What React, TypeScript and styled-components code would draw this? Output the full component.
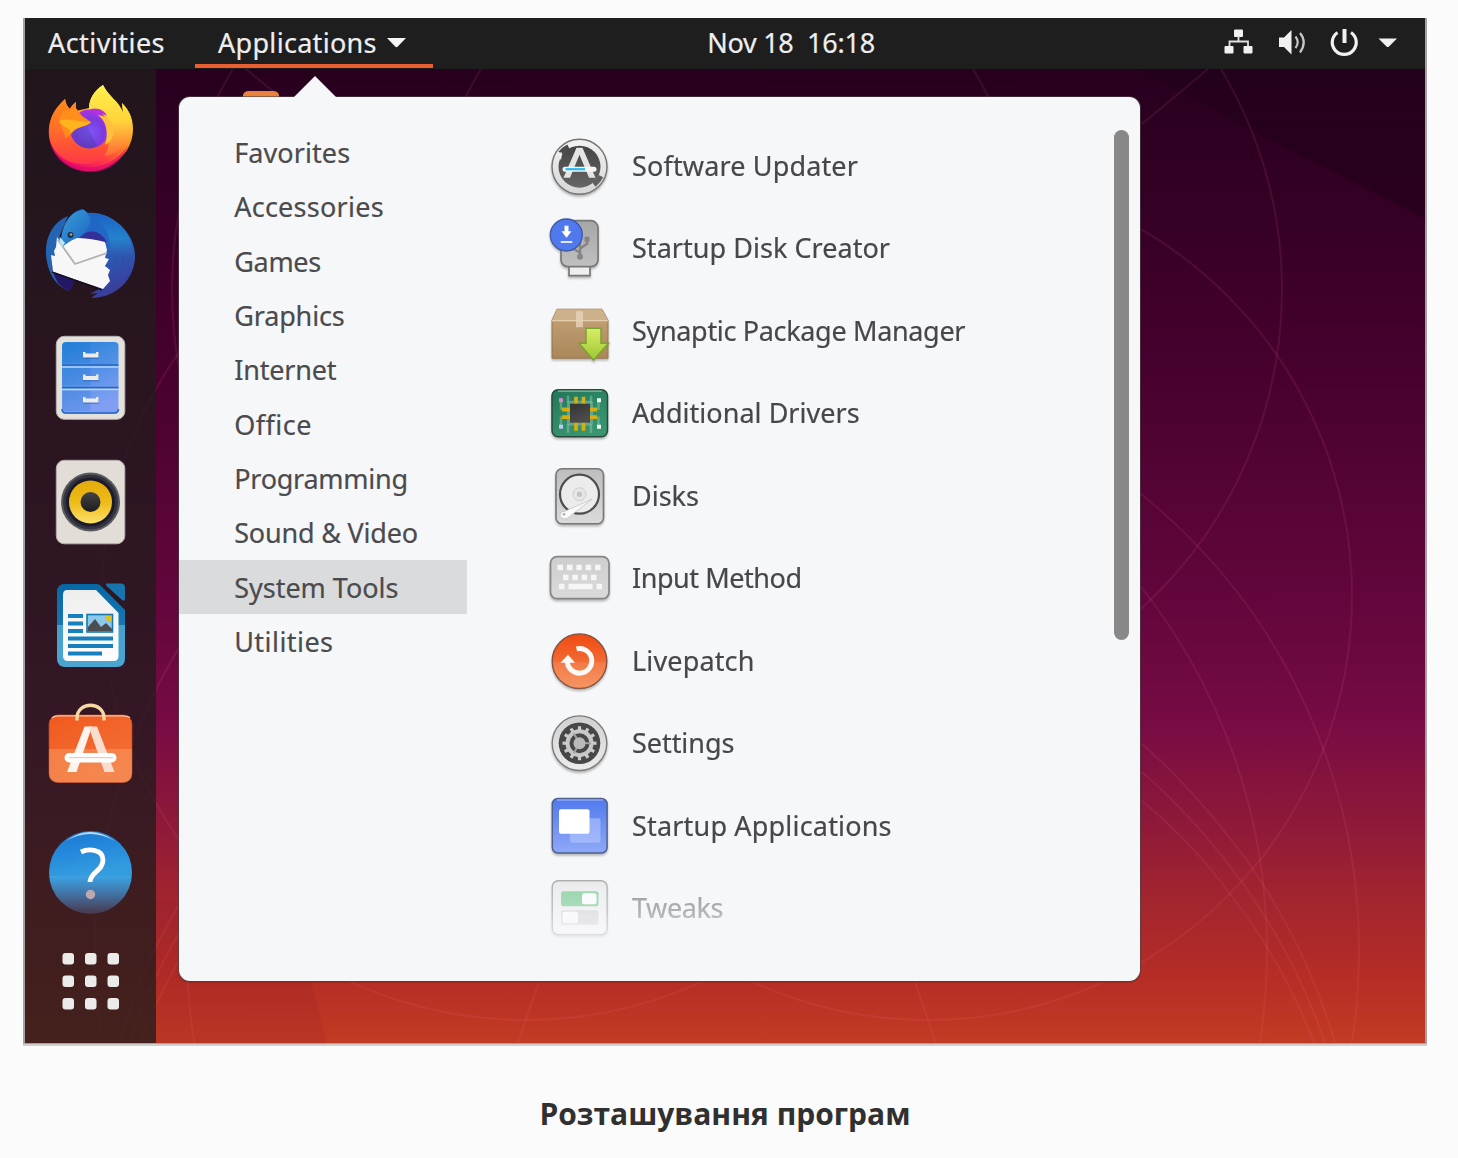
import React from 'react';
import styled, { createGlobalStyle } from 'styled-components';

const GlobalStyle = createGlobalStyle`
  * { box-sizing: border-box; }
  html, body { margin: 0; padding: 0; background: #fbfbfb; }
  svg { display: block; overflow: visible; }
`;

const UI_FONT = `'Noto Sans', 'Open Sans', sans-serif`;

const Page = styled.main`
  width: 1458px;
  height: 1158px;
  padding: 18px 0 0 23px;
  background: #fbfbfb;
  font-family: ${UI_FONT};
  overflow: hidden;
`;

const Figure = styled.figure`
  width: 1404px;
  margin: 0;
  display: flex;
  flex-direction: column;
`;

const Screen = styled.div`
  display: flex;
  flex-direction: column;
  height: 1026px;
  border: 2px solid #a3a1a2;
  border-top: 0;
  border-bottom-width: 1px;
  box-shadow: 0 2px 0 #d0d0d0;
`;

const Caption = styled.figcaption`
  padding-top: 48px;
  text-align: center;
  font: 700 30px/44px 'Open Sans', 'Noto Sans', sans-serif;
  color: #303030;
`;

const TopBar = styled.header`
  display: grid;
  grid-template-columns: 1fr auto 1fr;
  height: 51px;
  flex: none;
  background: #1e1e1e;
  color: #eeeeee;
`;

const BarGroup = styled.div<{ $end?: boolean }>`
  display: flex;
  align-items: flex-start;
  justify-content: ${p => (p.$end ? 'flex-end' : 'flex-start')};
`;

const Label = styled.span<{ $track: number }>`
  font-size: 27px;
  letter-spacing: ${p => p.$track}px;
  white-space: pre;
  -webkit-text-stroke: 0.2px currentColor;
`;

const BarButton = styled.div<{ $active?: boolean }>`
  display: flex;
  align-items: center;
  gap: 10px;
  width: ${p => (p.$active ? '238px' : 'auto')};
  height: 50px;
  line-height: 46px;
  padding: ${p => (p.$active ? '4px 0 0 23px' : '4px 0 0 23px')};
  border-bottom: 4px solid ${p => (p.$active ? '#e95f32' : 'transparent')};
`;

const Activities = styled.div`
  width: 170px;
`;

const Clock = styled.div`
  height: 50px;
  line-height: 49px;
  transform: translateX(66px);
`;

const Tray = styled.div`
  width: 204px;
  height: 51px;
`;

const Desktop = styled.section`
  position: relative;
  display: flex;
  flex: 1;
  min-height: 0;
  overflow: hidden;
`;

const Wallpaper = styled.svg`
  position: absolute;
  inset: 0;
  width: 100%;
  height: 100%;
`;

const Dock = styled.nav`
  position: relative;
  display: flex;
  flex-direction: column;
  width: 131px;
  align-items: center;
  background: rgba(32, 27, 28, 0.76);
`;

const DockItem = styled.div`
  width: 124px;
  height: 124px;
  flex: none;
`;

const Menu = styled.div`
  position: absolute;
  left: 154px;
  top: 28px;
  width: 961px;
  height: 884px;
  display: flex;
  border-radius: 11px;
  background: #f6f7f9;
  box-shadow: 0 0 0 1px rgba(80, 72, 72, 0.6), 0 1px 2px rgba(0, 0, 0, 0.4);
`;

const MenuArrow = styled.svg`
  position: absolute;
  left: 113px;
  top: -21px;
  width: 46px;
  height: 22px;
`;

const Categories = styled.ul`
  width: 288px;
  margin: 0;
  padding: 27.9px 0 0;
  list-style: none;
`;

const Category = styled.li<{ $selected?: boolean }>`
  height: 54.35px;
  line-height: 55.6px;
  padding-left: 55.2px;
  color: #4b4b4d;
  background: ${p => (p.$selected ? '#dadbdc' : 'transparent')};
`;

const Apps = styled.ul`
  flex: 1;
  margin: 0;
  padding: 27.8px 0 0 73px;
  list-style: none;
  mask-image: linear-gradient(#000 758px, rgba(0, 0, 0, 0.55) 784px, rgba(0, 0, 0, 0.42) 811px, rgba(0, 0, 0, 0.2) 838px, transparent 862px);
`;

const AppRow = styled.li`
  display: flex;
  align-items: center;
  gap: 12px;
  height: 82.5px;
  color: #47474a;
`;

const AppName = styled(Label)`
  padding-bottom: 1.4px;
`;

const AppIcon = styled.div`
  width: 80px;
  height: 82.5px;
  filter: drop-shadow(0 2px 1px rgba(0, 0, 0, 0.26));
`;

const ScrollThumb = styled.div`
  width: 15px;
  height: 510px;
  margin: 33px 11px 0 0;
  border-radius: 8px;
  background: #888888;
`;

type IconProps = { children: React.ReactNode; top: number };

const DockGlyph = ({ children, top }: IconProps) => (
  <svg width="124" height="124" viewBox={`29 ${top} 124 124`}>{children}</svg>
);

const AppGlyph = ({ children, top }: IconProps) => (
  <svg width="80" height="82.5" viewBox={`540 ${top} 80 82.5`}>{children}</svg>
);

const Grad = ({ id, from, to, mid, x2 = 0 }: { id: string; from: string; to: string; mid?: string; x2?: number }) => (
  <linearGradient id={id} x1="0" y1="0" x2={x2} y2="1">
    <stop offset="0" stopColor={from} />
    {mid && <stop offset=".5" stopColor={mid} />}
    <stop offset="1" stopColor={to} />
  </linearGradient>
);

const Firefox = () => (
  <>
    <defs>
      <linearGradient id="ffBody" x1=".8" y1="0" x2=".3" y2="1">
        <stop offset="0" stopColor="#fff44f" />
        <stop offset=".3" stopColor="#ffc630" />
        <stop offset=".52" stopColor="#ff8a20" />
        <stop offset=".75" stopColor="#ff3b45" />
        <stop offset="1" stopColor="#e5046f" />
      </linearGradient>
      <linearGradient id="ffHead" x1=".3" y1="0" x2=".3" y2="1">
        <stop offset="0" stopColor="#ff8b16" />
        <stop offset=".5" stopColor="#ff6a2a" />
        <stop offset="1" stopColor="#ff3647" />
      </linearGradient>
      <linearGradient id="ffTail" x1=".4" y1="0" x2=".4" y2="1">
        <stop offset="0" stopColor="#fff14d" />
        <stop offset=".5" stopColor="#ffd43b" />
        <stop offset="1" stopColor="#ff6a35" />
      </linearGradient>
      <radialGradient id="ffGlobe" cx=".5" cy=".6" r=".6">
        <stop offset="0" stopColor="#8058f6" />
        <stop offset=".6" stopColor="#7b3ae0" />
        <stop offset="1" stopColor="#b232dc" />
      </radialGradient>
      <Grad id="ffShade" from="#5b48c8" to="#4838a0" />
    </defs>
    <path d="M65 99C60 104 54 110 51 119C47 130 48 143 56 154C68 171 93 177 111 165C125 157 133 144 133 129C133 118 129 110 122 103L123 112C118 100 110 98 103 85C94 91 89 99 89 108L76 111L76 102C73 104 71 107 70 109Q66 106 65 99Z" fill="url(#ffBody)" />
    <path d="M103 85C94 91 89 99 89 109C104 110 113 121 112 133C111 147 101 154 87 153C108 163 128 149 131 129C133 118 129 110 122 103L123 113C118 101 110 99 103 85Z" fill="url(#ffTail)" />
    <path d="M65 99C60 104 54 110 51 119C47 131 49 145 58 154C68 164 86 168 100 160C106 156 109 148 109 138L90 123L76 112L76 102C73 104 71 107 70 109Q66 106 65 99Z" fill="url(#ffHead)" />
    <circle cx="89.500" cy="129" r="19.500" fill="url(#ffGlobe)" />
    <path d="M71 133Q78 126 87 126L97 146Q89 151 80 146Q72 141 71 133Z" fill="url(#ffShade)" opacity=".5" />
    <path d="M50 142C61 166 82 171 103 165C113 162 121 155 128 146C119 166 105 172 90 172C71 172 54 160 50 142Z" fill="#df0472" opacity=".6" />
    <path d="M97 115C107 116 114 121 114 131C113 138 110 143 105 145C109 133 106 119 97 115Z" fill="#ffc13c" />
    <path d="M90 109C99 107 105 111 107 116C101 113 97 115 97 115Z" fill="#b334dc" />
    <path d="M59 121L62 112L76 108L82 116L91 122C88 127 77 126 72 133L66 138Z" fill="#ff8f1a" />
    <path d="M59 121C69 117 79 123 91 122C88 127 73 126 71 134C70 126 62 128 59 121Z" fill="#ffb31e" />
  </>
);

const Thunderbird = () => (
  <>
    <defs>
      <Grad id="tbBody" from="#1b66c6" mid="#2468c2" to="#38409c" x2={0.3} />
      <Grad id="tbHead" from="#3aa0dc" to="#1b62bc" x2={1} />
      <Grad id="tbWing" from="#1b5fc4" mid="#248bd0" to="#373f9f" />
    </defs>
    <path d="M68 216C50 223 43 243 47 262C50 277 58 287 69 291L61 275L52 267L60 235Z" fill="#2564b3" />
    <path d="M52 267L59 271L85 281L74 281C74 287 69 291 69 291C60 288 54 279 52 267Z" fill="#241765" />
    <path d="M62 235C64 224 70 211 83 209L88 213C110 211 134 231 135 254C136 277 118 298 91 298L98 293L90 294L101 288L108 276L100 240L62 246Z" fill="url(#tbBody)" />
    <path d="M78 240C88 226 102 231 107 243L98 244Z" fill="#34309a" />
    <path d="M57 237L56 247L54 251L55 256L51 255L53 272L103 289L110 281L108 275L110 270L105 266L109 259L105 258L107 250L105 242Q90 238 75 238L63 246Z" fill="#f7f7f8" />
    <path d="M58 240L75 264L107 253" fill="none" stroke="#b0b1b5" strokeWidth="1.800" />
    <path d="M61 240C63 221 72 211 84 210C92 216 92 225 86 231C80 239 70 239 63 246Z" fill="url(#tbHead)" />
    <path d="M91 213C110 213 131 229 133 252L128 264L129 253L122 264L121 253L114 263L115 252L108 257C114 239 105 224 91 213Z" fill="url(#tbWing)" opacity=".75" />
    <path d="M60 237L65 243L62 247Q58 241 60 237Z" fill="#b7e5f0" />
    <circle cx="70.500" cy="235" r="3" fill="#173450" />
    <circle cx="71" cy="234.500" r="1.300" fill="#c0a06a" />
    <path d="M52 272L102 290" stroke="#17101d" strokeWidth="1.500" />
  </>
);

const Files = () => (
  <>
    <defs><Grad id="drawer" from="#2383da" to="#809ff3" x2={0.3} /></defs>
    <rect x="56.300" y="336.300" width="68.500" height="83" rx="8" fill="#e4e1da" stroke="#b8b1b2" strokeWidth="1" />
    <rect x="62" y="342" width="56.500" height="72" rx="4" fill="url(#drawer)" />
    <path d="M90.500 343v20h-28v-17q0-3 4-3zM90.500 368v17h-28v-17zM90.500 391v20h-24q-4 0-4-3v-17z" fill="#0c65c4" opacity=".16" />
    {[365, 387.5].map(y => (
      <g key={y}>
        <path d={`M62 ${y}h56.5`} stroke="#2467c0" strokeWidth="1.600" />
        <path d={`M62 ${y + 2}h56.5`} stroke="#b9d5fa" strokeWidth="1.300" />
      </g>
    ))}
    <path d="M62 409Q62 413 66 413H114Q118.500 413 118.500 409" fill="none" stroke="#2468c6" strokeWidth="1.600" />
    {[352, 374.5, 397].map(y => (
      <g key={y}>
        <path d={`M83 ${y}h3v2h10v-2h3v5.500h-16z`} fill="#1f5ba8" opacity=".4" transform="translate(0 1.500)" />
        <path d={`M83 ${y}h2.500v1.500h10.500v-1.500h2.500v5.500h-15.500z`} fill="#eeece8" />
      </g>
    ))}
  </>
);

const Speaker = () => (
  <>
    <defs>
      <Grad id="cone" from="#e2ab0b" mid="#edbb17" to="#fce06a" />
      <Grad id="dome" from="#444" to="#1c1c1e" />
    </defs>
    <rect x="56.300" y="460.300" width="68.500" height="83.500" rx="8" fill="#e2ded7" stroke="#b7b0b0" />
    <circle cx="90.500" cy="502" r="29.500" fill="#5c5c60" />
    <circle cx="90.500" cy="502" r="27.500" fill="#333440" />
    <circle cx="90.500" cy="502" r="24.500" fill="#1d1b2b" />
    <circle cx="90.500" cy="502" r="21.500" fill="url(#cone)" />
    <circle cx="90.500" cy="502" r="10" fill="url(#dome)" />
  </>
);

const Writer = () => (
  <>
    <defs>
      <Grad id="writer" from="#0767a5" to="#2589bd" />
      <Grad id="paper" from="#eeeeef" to="#fefefe" />
    </defs>
    <path d="M65 584H97Q100 584 102 587L125 610V658Q125 667 116 667H66Q57 667 57 658V592Q57 584 65 584Z" fill="url(#writer)" />
    <path d="M57 625H125V658Q125 667 116 667H66Q57 667 57 658Z" fill="#5fb6da" opacity=".65" />
    <path d="M106 583.500H121Q125 583.500 125 587.500V599Q125 602 122 600L106 585.500Z" fill="#1774ad" />
    <path d="M67 590H96L118.500 613V656Q118.500 661 113.500 661H68Q63 661 63 656V595Q63 590 67 590Z" fill="url(#paper)" />
    <path d="M68 616h15M68 623.500h15M68 631h15M68 638.500h45M68 646h45M68 653.500h34" stroke="#1880bd" strokeWidth="3.800" />
    <rect x="87" y="614.500" width="25.500" height="17.500" fill="#8bc8ea" stroke="#1677b2" strokeWidth="1.600" />
    <path d="M105 616h6.500v6q-6 0-6.500-6z" fill="#e2bf26" />
    <path d="M88 631V627L95 619L101 627L106 623L112 629V631Z" fill="#4b4d50" />
  </>
);

const SoftwareBag = () => (
  <>
    <defs><Grad id="bag" from="#f2591d" to="#f17138" x2={0.6} /></defs>
    <rect x="49" y="715" width="83" height="67.500" rx="9" fill="url(#bag)" stroke="#b84520" strokeWidth=".7" />
    <path d="M49 749H132V774Q132 782.500 123 782.500H58Q49 782.500 49 774Z" fill="#f7a66f" opacity=".42" />
    <path d="M52 718Q54 715.800 58 715.800H123Q128 715.800 130 718" fill="none" stroke="#fbc39f" strokeWidth="1.300" />
    <path d="M77 720.500V718C77 701 104 701 104 718V720.500" fill="none" stroke="#f6d9a1" strokeWidth="3.400" />
    <path d="M67 772L84.500 726.500H92L76.500 772Z" fill="#fff4ed" />
    <path d="M114.500 772L97 726.500H88.500L104.500 772Z" fill="#f9ded0" />
    <rect x="64.500" y="753" width="52" height="9.500" rx="4.700" fill="#fff" />
    <path d="M69 757.700H113" stroke="#f8b79e" strokeWidth="1" />
  </>
);

const Help = () => (
  <>
    <defs>
      <Grad id="helpTop" from="#1977ce" mid="#2489dc" to="#349ddf" x2={0.3} />
      <linearGradient id="helpLow" x1="0" y1="0" x2="0" y2="1">
        <stop offset="0" stopColor="#3ba3e4" />
        <stop offset=".5" stopColor="#426f9f" />
        <stop offset="1" stopColor="#49374b" />
      </linearGradient>
      <clipPath id="helpClip"><circle cx="90.500" cy="872.500" r="41.500" /></clipPath>
    </defs>
    <g clipPath="url(#helpClip)">
      <rect x="49" y="831" width="83" height="46" fill="url(#helpTop)" />
      <rect x="49" y="876" width="83" height="38" fill="url(#helpLow)" />
    </g>
    <path d="M66 841Q90 823 115 841Q90 827 66 841Z" fill="#b9daf4" />
    <path d="M81 852C87 849 103 848 103 860C103 871 90 872 90 882" fill="none" stroke="#fff" strokeWidth="4.800" />
    <circle cx="90.500" cy="894.500" r="4.700" fill="#bca9ae" />
  </>
);

const AppsGrid = () => (
  <>
    {[953, 975.5, 998].map(y => [62.5, 85, 107.5].map(x => (
      <rect key={`${x}-${y}`} x={x} y={y} width="11.500" height="11.500" rx="3" fill="#ebebea" />
    )))}
  </>
);

const Updater = () => (
  <>
    <defs>
      <Grad id="updRim" from="#f2f2f2" to="#d7d7d7" />
      <Grad id="updCore" from="#444" to="#666" />
    </defs>
    <circle cx="579.500" cy="166.500" r="27.500" fill="url(#updRim)" stroke="#747474" strokeWidth="1.400" />
    <circle cx="579.500" cy="166.500" r="21" fill="url(#updCore)" />
    <path d="M560.500 153A24 24 0 0 1 568.500 146.500" fill="none" stroke="#4a4a4a" strokeWidth="5" />
    <path d="M601 176A24 24 0 0 1 594 184.500" fill="none" stroke="#606060" strokeWidth="5" />
    <path d="M557 153L562 152L561 160Z" fill="#eee" />
    <path d="M563.500 177.500L576.500 147.500H582.500L595.500 177.500H589L579.500 154.500L570 177.500Z" fill="#e4e4e4" />
    <path d="M565 169H594" stroke="#f5f5f5" strokeWidth="5" strokeLinecap="round" />
    <path d="M565.500 169H585" stroke="#27bdf0" strokeWidth="2.200" />
  </>
);

const DiskCreator = () => (
  <>
    <defs><Grad id="usb" from="#a6a6a6" to="#c0c0c0" /></defs>
    <path d="M569 265H590V276H569Z" fill="#eee" stroke="#777" strokeWidth="1.700" />
    <rect x="561" y="221" width="37" height="46" rx="7" fill="url(#usb)" stroke="#777" strokeWidth="1.700" />
    <path d="M580 259V236M580 253L572 248V243M580 249L587 244V240" fill="none" stroke="#858585" strokeWidth="2.500" />
    <circle cx="580" cy="257" r="3" fill="#858585" />
    <path d="M584.500 237h5v5h-5z" fill="#858585" />
    <circle cx="566.300" cy="235.300" r="16" fill="#5179ee" stroke="#3f57a5" strokeWidth="1.300" />
    <path d="M564.500 226h4v5.500h3L566.500 238L561.500 231.500H564.500Z" fill="#fff" />
    <path d="M560.800 242.300h11.500" stroke="#dce6ff" strokeWidth="2" />
  </>
);

const Package = () => (
  <>
    <defs>
      <Grad id="box" from="#c5a478" to="#aa8759" />
      <Grad id="down" from="#d9ed66" to="#9cc735" />
    </defs>
    <path d="M557 309H602L608 320V358H552V320Z" fill="url(#box)" stroke="#957348" strokeWidth=".9" />
    <path d="M557 309H602L608 320H552Z" fill="#cdb18a" />
    <path d="M552 320.500H608" stroke="#e4ceae" strokeWidth="1.200" />
    <path d="M576 311h7v16h-7z" fill="#e7d5b9" opacity=".8" />
    <path d="M586 328H601V343H608.500L593.500 360L579 343H586Z" fill="url(#down)" stroke="#79a42b" strokeWidth="1.500" />
  </>
);

const Drivers = () => (
  <>
    <defs>
      <Grad id="board" from="#21775a" to="#39956f" x2={0.5} />
      <Grad id="chip" from="#333" to="#4d4d4d" x2={0.4} />
    </defs>
    <rect x="552" y="390" width="55.500" height="47" rx="6" fill="url(#board)" stroke="#28483b" strokeWidth="1.500" />
    <path d="M558 391.500H602" stroke="#8abb9f" strokeWidth="1.200" />
    <rect x="567" y="401" width="26" height="25" rx="3" fill="#78b69c" opacity=".65" />
    <path d="M561 401V409H568M598.500 401V409H591M561 426V418H568M598.500 426V418H591M568 396V403M591 396V403M568 424V433M591 424V433" fill="none" stroke="#8dc8ad" strokeWidth="2.500" opacity=".5" />
    <path d="M576 397V406M583.500 397V406M576 422V431M583.500 422V431M562 410H571M562 417.500H571M589 410H597M589 417.500H597" stroke="#d6ae12" strokeWidth="3.700" />
    <rect x="570" y="404" width="20" height="19" fill="url(#chip)" />
    <path d="M559 398.500h4v4h-4z" fill="#df85cf" />
    <path d="M597 398.500h4v4h-4zM597 425h4v4h-4z" fill="#ecfaf4" />
    <path d="M559 425h4v4h-4z" fill="#b8cdf6" />
  </>
);

const Disks = () => (
  <>
    <defs><Grad id="disk" from="#bdbdbd" to="#dbdbdb" /></defs>
    <rect x="556" y="468.500" width="47.500" height="55" rx="6" fill="url(#disk)" stroke="#777" strokeWidth="1.600" />
    <circle cx="579.500" cy="494" r="19.500" fill="#ececec" stroke="#4d4d4d" strokeWidth="2.200" />
    <circle cx="579.500" cy="494" r="6.500" fill="#e6e6e6" stroke="#d0d0d0" />
    <circle cx="579.500" cy="494" r="2.600" fill="#c4c4c4" />
    <path d="M560 516Q560 511 565 511L592 499L570 516Q565 521 561 517Z" fill="#fafafa" stroke="#bbb" strokeWidth=".7" />
    <circle cx="564" cy="514" r="1.300" fill="#aaa" />
  </>
);

const Keyboard = () => (
  <>
    <defs><Grad id="keys" from="#cecece" to="#dadada" /></defs>
    <rect x="550.500" y="557" width="58.500" height="42" rx="6.500" fill="url(#keys)" stroke="#858585" strokeWidth="1.700" />
    {[557.5, 567, 576.3, 585.6, 595].map(x => <rect key={x} x={x} y="565" width="5.500" height="5.500" fill="#f6f6f6" />)}
    {[563, 572.3, 581.6, 591].map(x => <rect key={x} x={x} y="575" width="5.500" height="5.500" fill="#f6f6f6" />)}
    <path d="M559 584h5.500v5.500h-5.500zM568.500 584h24v5.500h-24zM596.500 584h5.500v5.500h-5.500z" fill="#f6f6f6" />
  </>
);

const Livepatch = () => (
  <>
    <defs><Grad id="live" from="#ef4a12" to="#f58a52" /></defs>
    <circle cx="579.500" cy="661" r="27.300" fill="url(#live)" stroke="#85503c" strokeWidth="1.400" />
    <path d="M553 662H606A26.500 26.500 0 0 1 553 662Z" fill="#fff" opacity=".1" />
    <path d="M576.500 648.700A12.300 12.300 0 1 1 567.200 661" fill="none" stroke="#fbf8f6" strokeWidth="5" />
    <path d="M560.500 662.500L568 654.500L575 662.500Z" fill="#fbf8f6" />
  </>
);

const Settings = () => (
  <>
    <defs><Grad id="setRim" from="#d0d0d0" to="#ececec" /></defs>
    <circle cx="579.500" cy="743.500" r="27.300" fill="url(#setRim)" stroke="#7c7c7c" strokeWidth="1.400" />
    <circle cx="579.500" cy="743.500" r="20.800" fill="#474747" />
    <circle cx="579.500" cy="743.500" r="12" fill="none" stroke="#c7c7c7" strokeWidth="4" />
    {Array.from({ length: 12 }, (_, i) => (
      <rect key={i} x="577.900" y="726.500" width="3.200" height="5" fill="#cacaca" transform={`rotate(${i * 30} 579.500 743.500)`} />
    ))}
    {[90, 210, 330].map(a => (
      <rect key={a} x="578.500" y="732" width="2" height="10" fill="#a0a0a0" transform={`rotate(${a} 579.500 743.500)`} />
    ))}
    <circle cx="579.500" cy="743.500" r="6" fill="#b9b9b9" />
  </>
);

const StartupApps = () => (
  <>
    <defs><Grad id="start" from="#5079ed" to="#8fa9f8" /></defs>
    <rect x="552.300" y="798.300" width="54.800" height="54.500" rx="5.500" fill="url(#start)" stroke="#50608f" strokeWidth="1.500" />
    <path d="M557 799.800H603" stroke="#a9c0ff" strokeWidth="1.200" />
    <rect x="570" y="818" width="30.500" height="24.500" rx="2" fill="#b8caff" opacity=".55" />
    <rect x="559" y="809" width="30.500" height="24.500" rx="2" fill="#fff" />
  </>
);

const Tweaks = () => (
  <>
    <defs><Grad id="tw" from="#e1e1e1" to="#f8f8f8" /></defs>
    <rect x="552.300" y="881" width="54.800" height="54" rx="6" fill="url(#tw)" stroke="#777" strokeWidth="1.400" />
    <rect x="561" y="891.500" width="37.500" height="15" rx="2.500" fill="#43b866" />
    <rect x="582" y="893.500" width="14.500" height="11" rx="2" fill="#fff" />
    <rect x="561" y="910.500" width="37.500" height="14.500" rx="2.500" fill="#c3c3c3" />
    <rect x="562.500" y="912" width="15.500" height="11.500" rx="2" fill="#fff" />
  </>
);

const StatusIcons = () => (
  <svg width="204" height="51" viewBox="1221 18 204 51" fill="#f1f1f2">
    <rect x="1234" y="29.500" width="9" height="7.500" rx="1" />
    <path d="M1238.500 36V41.500M1229.500 47V41.500H1248V47" fill="none" stroke="#e0e0e1" strokeWidth="1.800" />
    <rect x="1224.500" y="46" width="9" height="7.500" rx="1" />
    <rect x="1243.500" y="46" width="9" height="7.500" rx="1" />
    <path d="M1279 37.500h5l7.500-7.500v24.500l-7.500-7.500h-5z" />
    <path d="M1295.500 36.500q4.500 6 0 11.500M1300 33q7.500 9 0 19.500" fill="none" stroke="#c6c6c7" strokeWidth="2.200" />
    <path d="M1337.500 32.500A12 12 0 1 0 1351 32.500" fill="none" stroke="#f1f1f2" strokeWidth="3.200" />
    <path d="M1342.500 29h4v14h-4z" />
    <path d="M1378.500 38.500h18.500l-8 8q-1.200 1-2.500 0z" />
  </svg>
);

const WallpaperArt = () => {
  const rings = (
    <>
      <circle cx="851" cy="290" r="431" />
      <circle cx="928" cy="596" r="424" />
      <circle cx="773" cy="950" r="586" />
      <path d="M1208 69L1142 124" />
      <path d="M1142 744Q1200 795 1253 869Q1310 955 1335 1043M1142 772Q1195 818 1241 881Q1295 955 1325 1043M1142 801Q1190 840 1230 894Q1285 965 1314 1043" />
      <path d="M915 982L936 1043" />
    </>
  );
  return (
    <Wallpaper viewBox="25 69 1400 974" preserveAspectRatio="none">
      <defs>
        <linearGradient id="sky" x1="0" y1="0" x2="0" y2="1">
          <stop offset="0" stopColor="#27001e" />
          <stop offset=".24" stopColor="#3f002a" />
          <stop offset=".55" stopColor="#63063d" />
          <stop offset=".67" stopColor="#770b44" />
          <stop offset=".76" stopColor="#8b173a" />
          <stop offset=".86" stopColor="#a4262e" />
          <stop offset=".93" stopColor="#b52d25" />
          <stop offset="1" stopColor="#c23b23" />
        </linearGradient>
        <linearGradient id="peak" x1="0" y1="0" x2="0" y2="1">
          <stop offset="0" stopColor="#1d0018" stopOpacity=".4" />
          <stop offset="1" stopColor="#1d0018" stopOpacity=".5" />
        </linearGradient>
      </defs>
      <rect x="25" y="69" width="1400" height="975" fill="url(#sky)" />
      <path d="M1140 69H1425V219L1260 135Z" fill="url(#peak)" />
      <path d="M25 900H290L327 1044H25Z" fill="#8f1e2c" opacity=".14" />
      <g fill="none" stroke="#ff6a9c" strokeOpacity=".11" strokeWidth="2">
        {rings}
        <g transform="translate(1454 0) scale(-1 1)">{rings}</g>
      </g>
      <path d="M243 99V95Q244 91 249 91H273Q278 91 279 95V99Z" fill="#e8823c" />
    </Wallpaper>
  );
};

const dockItems = [Firefox, Thunderbird, Files, Speaker, Writer, SoftwareBag, Help, AppsGrid];

const categories: [string, number][] = [
  ['Favorites', 0.08], ['Accessories', 0.25], ['Games', -0.3], ['Graphics', -0.15], ['Internet', -0.2],
  ['Office', 0.5], ['Programming', -0.25], ['Sound & Video', -0.2], ['System Tools', -0.02], ['Utilities', 0.45],
];

const apps: [string, number, React.FC][] = [
  ['Software Updater', 0.15, Updater],
  ['Startup Disk Creator', 0.04, DiskCreator],
  ['Synaptic Package Manager', -0.33, Package],
  ['Additional Drivers', 0.03, Drivers],
  ['Disks', 0, Disks],
  ['Input Method', -0.45, Keyboard],
  ['Livepatch', 0.15, Livepatch],
  ['Settings', -0.05, Settings],
  ['Startup Applications', 0.18, StartupApps],
  ['Tweaks', -0.4, Tweaks],
];

export default function App() {
  return (
    <Page>
      <GlobalStyle />
      <Figure>
        <Screen>
          <TopBar>
            <BarGroup>
              <Activities><BarButton><Label $track={0.45}>Activities</Label></BarButton></Activities>
              <BarButton $active>
                <Label $track={0.3}>Applications</Label>
                <svg width="19" height="10" viewBox="0 0 19 10"><path d="M0 0H19L10.800 8.600Q9.500 9.800 8.200 8.600Z" fill="#f5f5f5" /></svg>
              </BarButton>
            </BarGroup>
            <Clock><Label $track={-0.25}>{'Nov 18  16:18'}</Label></Clock>
            <BarGroup $end><Tray><StatusIcons /></Tray></BarGroup>
          </TopBar>
          <Desktop>
            <WallpaperArt />
            <Dock>
              {dockItems.map((Icon, i) => (
                <DockItem key={i}><DockGlyph top={69 + i * 124}><Icon /></DockGlyph></DockItem>
              ))}
            </Dock>
            <Menu>
              <MenuArrow viewBox="0 0 46 22"><path d="M1 22L23 0L45 22Z" fill="#f6f7f9" /></MenuArrow>
              <Categories>
                {categories.map(([name, track]) => (
                  <Category key={name} $selected={name === 'System Tools'}><Label $track={track}>{name}</Label></Category>
                ))}
              </Categories>
              <Apps>
                {apps.map(([name, track, Icon], i) => (
                  <AppRow key={name}>
                    <AppIcon><AppGlyph top={124.8 + i * 82.5}><Icon /></AppGlyph></AppIcon>
                    <AppName $track={track}>{name}</AppName>
                  </AppRow>
                ))}
              </Apps>
              <ScrollThumb />
            </Menu>
          </Desktop>
        </Screen>
        <Caption>Розташування програм</Caption>
      </Figure>
    </Page>
  );
}
